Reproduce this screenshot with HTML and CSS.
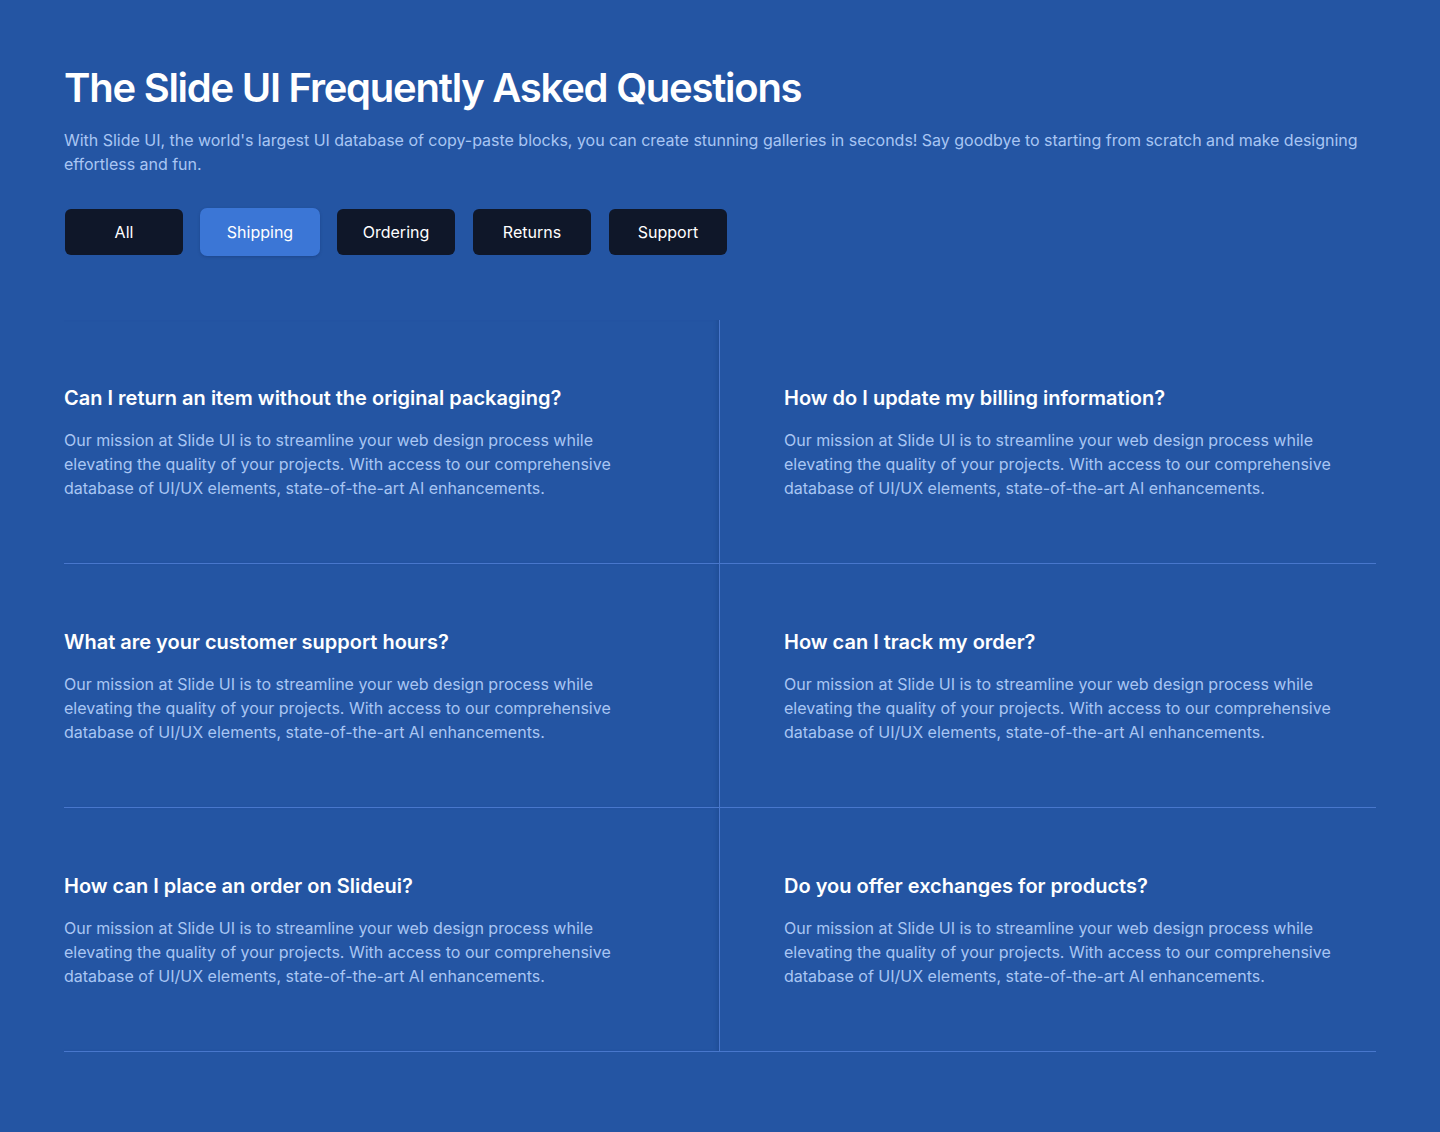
FILE: index.html
```html
<!DOCTYPE html>
<html lang="en">
<head>
<meta charset="utf-8">
<title>FAQ</title>
<link rel="stylesheet" href="styles.css">
</head>
<body>
<main class="page">
  <h1 class="title">The Slide UI Frequently Asked Questions</h1>
  <p class="lead">With Slide UI, the world's largest UI database of copy-paste blocks, you can create stunning galleries in seconds! Say goodbye to starting from scratch and make designing effortless and fun.</p>
  <div class="tabs">
    <button class="tab">All</button>
    <button class="tab active">Shipping</button>
    <button class="tab">Ordering</button>
    <button class="tab">Returns</button>
    <button class="tab">Support</button>
  </div>
  <section class="grid">
    <div class="cell left">
      <h3 class="q">Can I return an item without the original packaging?</h3>
      <p class="a">Our mission at Slide UI is to streamline your web design process while elevating the quality of your projects. With access to our comprehensive database of UI/UX elements, state-of-the-art AI enhancements.</p>
    </div>
    <div class="cell right">
      <h3 class="q">How do I update my billing information?</h3>
      <p class="a">Our mission at Slide UI is to streamline your web design process while elevating the quality of your projects. With access to our comprehensive database of UI/UX elements, state-of-the-art AI enhancements.</p>
    </div>
    <div class="cell left">
      <h3 class="q">What are your customer support hours?</h3>
      <p class="a">Our mission at Slide UI is to streamline your web design process while elevating the quality of your projects. With access to our comprehensive database of UI/UX elements, state-of-the-art AI enhancements.</p>
    </div>
    <div class="cell right">
      <h3 class="q">How can I track my order?</h3>
      <p class="a">Our mission at Slide UI is to streamline your web design process while elevating the quality of your projects. With access to our comprehensive database of UI/UX elements, state-of-the-art AI enhancements.</p>
    </div>
    <div class="cell left">
      <h3 class="q">How can I place an order on Slideui?</h3>
      <p class="a">Our mission at Slide UI is to streamline your web design process while elevating the quality of your projects. With access to our comprehensive database of UI/UX elements, state-of-the-art AI enhancements.</p>
    </div>
    <div class="cell right">
      <h3 class="q">Do you offer exchanges for products?</h3>
      <p class="a">Our mission at Slide UI is to streamline your web design process while elevating the quality of your projects. With access to our comprehensive database of UI/UX elements, state-of-the-art AI enhancements.</p>
    </div>
  </section>
</main>
</body>
</html>
```

FILE: styles.css
```css
* { box-sizing: border-box; }
html, body {
  margin: 0;
  padding: 0;
  background: #2455a3;
}
body {
  font-family: Inter, "Noto Sans", "Liberation Sans", sans-serif;
  color: #ffffff;
  min-height: 1132px;
}
.page {
  padding: 64px 64px 80px 64px;
}
.title {
  margin: 0;
  font-size: 40px;
  line-height: 48px;
  font-weight: 600;
  letter-spacing: -1.25px;
  color: #ffffff;
}
.lead {
  margin: 16px 0 0 0;
  font-size: 16px;
  line-height: 24px;
  letter-spacing: -0.02px;
  color: #a9c6f3;
}
.tabs {
  display: flex;
  gap: 18px;
  margin-top: 33px;
  padding-left: 1px;
}
.tab {
  width: 118px;
  height: 46px;
  border: none;
  border-radius: 6px;
  background: #0f1729;
  color: #ffffff;
  font-family: inherit;
  font-size: 16px;
  font-weight: 400;
  padding: 0;
}
.tab.active {
  background: #3b76d6;
  width: 120px;
  height: 48px;
  margin-top: -1px;
  margin-left: -1px;
  margin-right: -1px;
  border-radius: 7px;
  box-shadow: 0 1px 3px rgba(10, 30, 80, 0.25);
}
.grid {
  display: grid;
  grid-template-columns: 655px 657px;
  margin-top: 64px;
}
.cell {
  padding: 64px 0 63px 0;
  border-bottom: 1px solid #4877cc;
}
.cell.right {
  padding-left: 64px;
  border-left: 1px solid #4877cc;
}
.cell.left {
  box-shadow: inset -4px 0 4px -3px rgba(20, 50, 110, 0.35);
}
.q {
  margin: 0;
  font-size: 20px;
  line-height: 28px;
  font-weight: 600;
  color: #ffffff;
}
.a {
  margin: 16px 0 0 0;
  max-width: 576px;
  font-size: 16px;
  line-height: 24px;
  color: #a9c6f3;
}
```
